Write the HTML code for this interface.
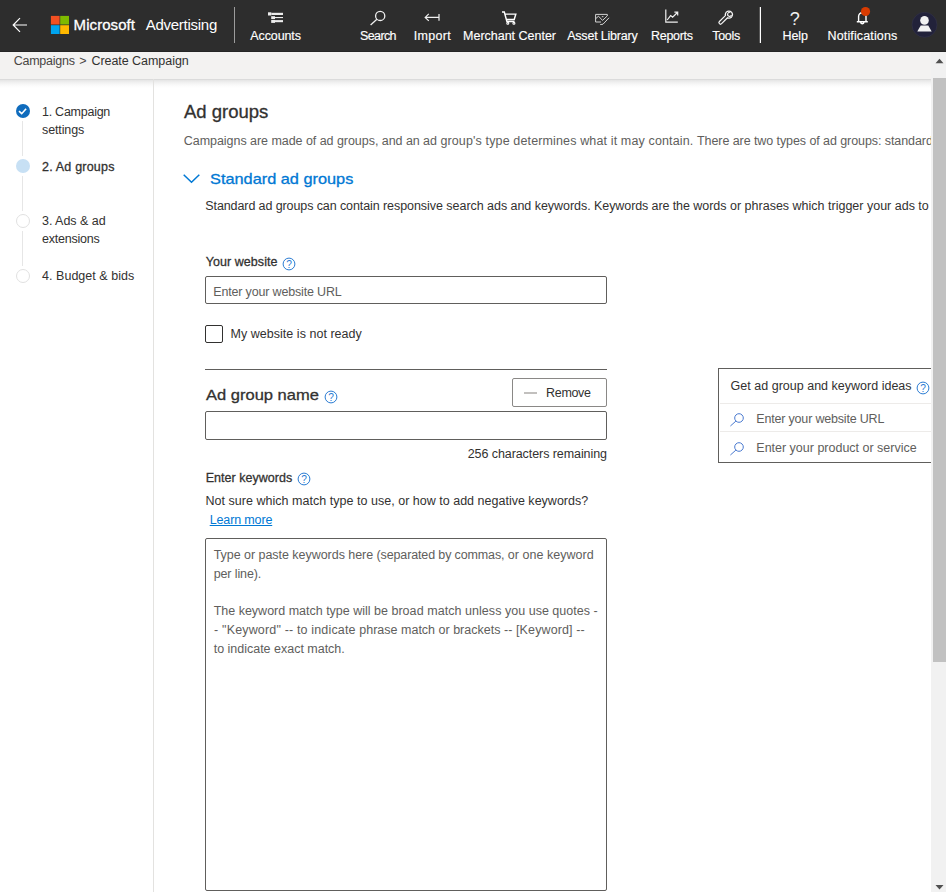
<!DOCTYPE html>
<html lang="en"><head><meta charset="utf-8"><title>Create Campaign - Microsoft Advertising</title>
<style>
html,body{margin:0;padding:0;}
body{width:946px;height:892px;position:relative;overflow:hidden;background:#fff;font-family:"Liberation Sans",sans-serif;}
.t{position:absolute;white-space:pre;line-height:1;margin:0;padding:0;}
.a{position:absolute;box-sizing:border-box;}
#hdr{left:0;top:0;width:946px;height:52px;background:#2d2d2d;border-bottom:1px solid #252525;}
#bc{left:0;top:52px;width:931px;height:27px;background:#f3f2f1;}
#bcsh{left:0;top:79px;width:931px;height:9px;background:linear-gradient(#d4d4d4,#e6e6e6 14%,#f1f1f1 40%,#fafafa 70%,#ffffff);}
#side{left:0;top:79px;width:154px;height:813px;border-right:1px solid #e3e2e0;}
#clip{left:154px;top:79px;width:777px;height:813px;overflow:hidden;}
.vdiv{width:1px;background:#7a7a7a;}
.box{border:1px solid #605e5c;border-radius:2px;background:#fff;}
.sline{width:1px;background:#e6e6e6;left:22px;}
.dot{width:14px;height:14px;border-radius:50%;left:16px;}
#sbtrack{z-index:5;left:931px;top:52px;width:15px;height:840px;background:#f1f1f1;}
#sbthumb{z-index:6;left:933px;top:78px;width:13px;height:584px;background:#c1c1c1;}
svg{position:absolute;overflow:visible;}

#sbar{z-index:7;}

</style></head>
<body>
<div class="a" id="hdr"></div>
<div class="a" id="bc"></div>
<div class="a" id="bcsh"></div>
<div class="a" id="side"></div>
<!-- header pieces -->
<svg style="left:12px;top:17px" width="16" height="16" viewBox="0 0 16 16"><path d="M15 8H1.5M8 1.2L1.2 8l6.8 6.8" fill="none" stroke="#fff" stroke-width="1.2"/></svg>
<svg style="left:0;top:0" width="80" height="52" viewBox="0 0 80 52"><rect x="50.9" y="15.9" width="8.7" height="8.6" fill="#f25022"/><rect x="60.2" y="15.9" width="8.8" height="8.6" fill="#7fba00"/><rect x="50.9" y="25.2" width="8.7" height="8.8" fill="#00a4ef"/><rect x="60.2" y="25.2" width="8.8" height="8.8" fill="#ffb900"/></svg>
<div class="a vdiv" style="left:234px;top:7px;height:36px;background:#9c9c9c"></div>
<div class="a vdiv" style="left:760px;top:7px;height:36px;background:#fdfdfd"></div><div class="a vdiv" style="left:759px;top:7px;height:36px;background:#5a5a5a"></div>

<svg style="left:0;top:0" width="946" height="52" viewBox="0 0 946 52" fill="none" stroke="#f0f0f0" stroke-width="1.1">
<!-- accounts -->
<g fill="#ececec" stroke="none"><rect x="268" y="12.3" width="3.3" height="3.2"/><rect x="271.3" y="12.8" width="11.7" height="2.2"/><rect x="271.2" y="16.2" width="3.8" height="2.8"/><rect x="275" y="17" width="8" height="1.1"/><rect x="271.2" y="19.9" width="3.8" height="3"/><rect x="275" y="20.1" width="8" height="2.1"/></g>
<!-- search -->
<circle cx="380.2" cy="15.9" r="4.6" stroke-width="1.3"/><path d="M376.9 19.3L370.6 25" stroke-width="1.3"/>
<!-- import -->
<path d="M425.2 17.4H439M428.8 13.9L425.2 17.4l3.6 3.5M439 14v6.8" stroke-width="1.2"/>
<!-- cart -->
<path d="M502 12h2.3l2.6 9.4h7.6M505 14.1h10.8l-1.6 5.4H506.4" stroke="#fff" stroke-width="1.45"/><circle cx="507.8" cy="23.3" r="1" stroke="#fff" stroke-width="1.1"/><circle cx="513.9" cy="23.3" r="1" stroke="#fff" stroke-width="1.1"/>
<!-- asset library -->
<g stroke="#d4d4d4" stroke-width="1"><path d="M607.3 16V14.4H595.6V22H601"/><path d="M595.8 18.6l2.7-2.4 4 4.2 4.6-4.3M609 17.8l-6 6.4-2.8.4M601.8 16.7h1.6"/></g>
<!-- reports -->
<path d="M665.8 9.6V22.2H677.8M667.2 20l3.4-4.4 2 1.5 4.8-4.6M674.4 12.2h3.3v3.3" stroke-width="1.2"/>
<!-- tools wrench -->
<path d="M720.5 22.6L727.2 15.9" stroke="#f4f4f4" stroke-width="4.3" stroke-linecap="round"/>
<circle cx="728.9" cy="14.6" r="4.2" fill="#f4f4f4" stroke="none"/>
<path d="M720.5 22.6L727.4 15.7" stroke="#2d2d2d" stroke-width="1.9" stroke-linecap="round"/>
<circle cx="728.9" cy="14.6" r="2.9" fill="#2d2d2d" stroke="none"/>
<path d="M730.3 12.4a2 2 0 1 0 1.2 2.6" stroke="#f4f4f4" stroke-width="1.1"/>
<!-- bell -->
<path d="M858.6 21.6v-5.2a3.7 3.7 0 0 1 7.4 0v5.2M856.8 21.8h11M860.6 22.6a1.8 1.8 0 0 0 3.4 0" stroke="#fff" stroke-width="1.4"/>
<circle cx="865.5" cy="11.5" r="4.6" fill="#d83b01" stroke="none"/>
<!-- avatar -->
<circle cx="924.5" cy="24.8" r="12.5" fill="#22223a" stroke="#34344a" stroke-width="0.6"/>
<circle cx="924.5" cy="20.4" r="4.3" fill="#f2f2f2" stroke="none"/>
<path d="M917.3 31.6l3.4-6.2h7.6l3.4 6.2z" fill="#f2f2f2" stroke="none"/>
<text x="794.8" y="24.6" font-family="Liberation Sans, sans-serif" font-size="18" fill="#f0f0f0" stroke="none" text-anchor="middle">?</text>
</svg>

<!-- sidebar -->
<div class="a sline" style="top:121px;height:35px"></div>
<div class="a sline" style="top:176px;height:35px"></div>
<div class="a sline" style="top:231px;height:35px"></div>
<div class="a dot" style="top:104px;background:#0f6cbd"></div>
<svg style="left:16px;top:104px" width="14" height="14" viewBox="0 0 14 14"><path d="M3 7.1l2.7 2.6 4.4-4.9" fill="none" stroke="#fff" stroke-width="1.6"/></svg>
<div class="a dot" style="top:159px;background:#c7e0f4"></div>
<div class="a dot" style="top:214px;background:#fff;border:1px solid #e1e1e1"></div>
<div class="a dot" style="top:268.5px;background:#fff;border:1px solid #e1e1e1"></div>
<!-- main shapes -->
<svg style="left:183px;top:174px" width="17" height="10" viewBox="0 0 17 10"><path d="M0.7 0.7L8.5 8.3 16.3 0.7" fill="none" stroke="#0078d4" stroke-width="1.5"/></svg>
<div class="a box" style="left:205px;top:276px;width:402px;height:28px"></div>
<div class="a" style="left:205px;top:325px;width:18px;height:18px;border:1px solid #323130;border-radius:2px"></div>
<div class="a" style="left:205px;top:369px;width:402px;height:1px;background:#605e5c"></div>
<div class="a" style="left:512px;top:378px;width:95px;height:29px;border:1px solid #8a8886;border-radius:2px"></div>
<div class="a" style="left:524px;top:392px;width:13px;height:2px;background:#c2c0be"></div>
<div class="a box" style="left:205px;top:411px;width:402px;height:29px"></div>
<div class="a box" style="left:205px;top:538px;width:402px;height:353px"></div>
<!-- panel -->
<div class="a" style="left:718px;top:368px;width:230px;height:95px;border:1px solid #605e5c;background:#fff"></div>
<div class="a" style="left:720px;top:403px;width:211px;height:1px;background:#edebe9"></div>
<div class="a" style="left:720px;top:431px;width:211px;height:1px;background:#edebe9"></div>
<svg style="left:281px;top:255.8px" width="16" height="16" viewBox="-8 -8 16 16"><circle cx="0" cy="0" r="5.9" fill="none" stroke="#2b7cd3" stroke-width="1"/><text x="0" y="3.6" font-family="Liberation Sans, sans-serif" font-size="10.2" fill="#2b7cd3" text-anchor="middle">?</text></svg><svg style="left:323px;top:389px" width="16" height="16" viewBox="-8 -8 16 16"><circle cx="0" cy="0" r="5.9" fill="none" stroke="#2b7cd3" stroke-width="1"/><text x="0" y="3.6" font-family="Liberation Sans, sans-serif" font-size="10.2" fill="#2b7cd3" text-anchor="middle">?</text></svg><svg style="left:295.6px;top:471.3px" width="16" height="16" viewBox="-8 -8 16 16"><circle cx="0" cy="0" r="5.9" fill="none" stroke="#2b7cd3" stroke-width="1"/><text x="0" y="3.6" font-family="Liberation Sans, sans-serif" font-size="10.2" fill="#2b7cd3" text-anchor="middle">?</text></svg><svg style="left:915.3px;top:380px" width="16" height="16" viewBox="-8 -8 16 16"><circle cx="0" cy="0" r="5.9" fill="none" stroke="#2b7cd3" stroke-width="1"/><text x="0" y="3.6" font-family="Liberation Sans, sans-serif" font-size="10.2" fill="#2b7cd3" text-anchor="middle">?</text></svg><svg style="left:728.7px;top:408.2px" width="20" height="20" viewBox="-10 -10 20 20" fill="none" stroke="#4a7ad0" stroke-width="1"><circle cx="0" cy="0" r="4.3"/><path d="M-3.1 3.1L-8.6 8"/></svg><svg style="left:728.7px;top:437.2px" width="20" height="20" viewBox="-10 -10 20 20" fill="none" stroke="#4a7ad0" stroke-width="1"><circle cx="0" cy="0" r="4.3"/><path d="M-3.1 3.1L-8.6 8"/></svg>
<!-- scrollbar -->
<div class="a" id="sbtrack"></div>
<div class="a" id="sbthumb"></div>
<svg id="sbar" style="left:931px;top:52px" width="15" height="840" viewBox="0 0 15 840"><path d="M4.5 11.2L8.5 6.8 12.5 11.2z" fill="#505050"/><path d="M4.5 833L8.5 837.4 12.5 833z" fill="#505050"/></svg>

<div class="t" id="ms" style="left:73.6px;top:17.00px;font-size:15px;color:#ffffff;letter-spacing:0.070px;-webkit-text-stroke:0.3px #ffffff;">Microsoft</div>
<div class="t" id="adv" style="left:145.7px;top:17.00px;font-size:15px;color:#ffffff;letter-spacing:-0.260px;">Advertising</div>
<div class="t" id="n1" style="left:250.3px;top:30.00px;font-size:12.5px;color:#ffffff;letter-spacing:-0.103px;-webkit-text-stroke:0.15px #ffffff;">Accounts</div>
<div class="t" id="n2" style="left:360.0px;top:30.00px;font-size:12.5px;color:#ffffff;letter-spacing:-0.622px;-webkit-text-stroke:0.15px #ffffff;">Search</div>
<div class="t" id="n3" style="left:413.8px;top:30.00px;font-size:12.5px;color:#ffffff;letter-spacing:0.312px;-webkit-text-stroke:0.15px #ffffff;">Import</div>
<div class="t" id="n4" style="left:463.1px;top:30.00px;font-size:12.5px;color:#ffffff;letter-spacing:-0.015px;-webkit-text-stroke:0.15px #ffffff;">Merchant Center</div>
<div class="t" id="n5" style="left:567.2px;top:30.00px;font-size:12.5px;color:#ffffff;letter-spacing:-0.204px;-webkit-text-stroke:0.15px #ffffff;">Asset Library</div>
<div class="t" id="n6" style="left:651.0px;top:30.00px;font-size:12.5px;color:#ffffff;letter-spacing:-0.297px;-webkit-text-stroke:0.15px #ffffff;">Reports</div>
<div class="t" id="n7" style="left:712.2px;top:30.00px;font-size:12.5px;color:#ffffff;letter-spacing:-0.272px;-webkit-text-stroke:0.15px #ffffff;">Tools</div>
<div class="t" id="n8" style="left:782.6px;top:30.00px;font-size:12.5px;color:#ffffff;letter-spacing:-0.106px;-webkit-text-stroke:0.15px #ffffff;">Help</div>
<div class="t" id="n9" style="left:827.5px;top:30.00px;font-size:12.5px;color:#ffffff;letter-spacing:0.142px;-webkit-text-stroke:0.15px #ffffff;">Notifications</div>
<div class="t" id="bc1" style="left:13.7px;top:55.00px;font-size:12.5px;color:#484644;letter-spacing:-0.254px;">Campaigns</div>
<div class="t" id="bc2" style="left:79.2px;top:55.00px;font-size:12.5px;color:#484644;letter-spacing:-0.513px;">&gt;</div>
<div class="t" id="bc3" style="left:91.4px;top:55.00px;font-size:12.5px;color:#323130;letter-spacing:-0.041px;">Create Campaign</div>
<div class="t" id="s1a" style="left:42.0px;top:106.00px;font-size:12.5px;color:#323130;letter-spacing:-0.258px;">1. Campaign</div>
<div class="t" id="s1b" style="left:42.0px;top:124.00px;font-size:12.5px;color:#323130;letter-spacing:-0.113px;">settings</div>
<div class="t" id="s2" style="left:42.0px;top:161.00px;font-size:12.5px;color:#323130;letter-spacing:0.200px;-webkit-text-stroke:0.3px #323130;">2. Ad groups</div>
<div class="t" id="s3a" style="left:42.0px;top:215.00px;font-size:12.5px;color:#323130;letter-spacing:-0.034px;">3. Ads &amp; ad</div>
<div class="t" id="s3b" style="left:42.0px;top:233.00px;font-size:12.5px;color:#323130;letter-spacing:-0.218px;">extensions</div>
<div class="t" id="s4" style="left:42.0px;top:270.00px;font-size:12.5px;color:#323130;letter-spacing:0.038px;">4. Budget &amp; bids</div>
<div class="t" id="h1" style="left:183.7px;top:104.00px;font-size:17.5px;color:#323130;letter-spacing:0.000px;-webkit-text-stroke:0.3px #323130;transform:scaleX(1.0566);transform-origin:0 0;">Ad groups</div>
<div class="t" id="d1a" style="left:183.8px;top:135.00px;font-size:12.5px;color:#605e5c;letter-spacing:-0.045px;">Campaigns are made of ad groups, and an ad </div>
<div class="t" id="d1b" style="left:440.4px;top:135.00px;font-size:12.5px;color:#605e5c;letter-spacing:0.137px;">group's type determines what it may contain. </div>
<div class="t" id="d1c" style="left:697.0px;top:135.00px;font-size:12.5px;color:#605e5c;letter-spacing:-0.076px;">There are two types of ad groups: </div>
<div class="t" id="d1z" style="left:884.8px;top:135.00px;font-size:12.5px;color:#605e5c;letter-spacing:-0.076px;">standard and dynamic search ad groups.</div>
<div class="t" id="h2" style="left:210.0px;top:171.00px;font-size:15px;color:#0078d4;letter-spacing:0.000px;-webkit-text-stroke:0.3px #0078d4;transform:scaleX(1.0875);transform-origin:0 0;">Standard ad groups</div>
<div class="t" id="d2a" style="left:205.3px;top:200.00px;font-size:12.5px;color:#323130;letter-spacing:-0.100px;">Standard ad groups can contain </div>
<div class="t" id="d2b" style="left:382.9px;top:200.00px;font-size:12.5px;color:#323130;letter-spacing:-0.040px;">responsive search ads and keywords. </div>
<div class="t" id="d2c" style="left:594.1px;top:200.00px;font-size:12.5px;color:#323130;letter-spacing:-0.097px;">Keywords are the </div>
<div class="t" id="d2d" style="left:693.2px;top:200.00px;font-size:12.5px;color:#323130;letter-spacing:0.002px;">words or phrases which trigger your ads to</div>
<div class="t" id="d2z" style="left:928.8px;top:200.00px;font-size:12.5px;color:#323130;letter-spacing:0.002px;"> show in search results.</div>
<div class="t" id="l1" style="left:205.7px;top:256.00px;font-size:12.5px;color:#323130;letter-spacing:0.061px;-webkit-text-stroke:0.28px #323130;">Your website</div>
<div class="t" id="p1" style="left:213.3px;top:286.00px;font-size:12.5px;color:#605e5c;letter-spacing:-0.172px;">Enter your website URL</div>
<div class="t" id="c1" style="left:230.5px;top:328.00px;font-size:12.5px;color:#323130;letter-spacing:0.031px;">My website is not ready</div>
<div class="t" id="h3" style="left:205.7px;top:387.00px;font-size:15px;color:#323130;letter-spacing:0.000px;-webkit-text-stroke:0.3px #323130;transform:scaleX(1.1006);transform-origin:0 0;">Ad group name</div>
<div class="t" id="rm" style="left:546.1px;top:387.00px;font-size:12.5px;color:#323130;letter-spacing:-0.329px;">Remove</div>
<div class="t" id="ch" style="left:467.7px;top:448.00px;font-size:12.5px;color:#323130;letter-spacing:-0.076px;">256 characters remaining</div>
<div class="t" id="l2" style="left:205.7px;top:472.00px;font-size:12.5px;color:#323130;letter-spacing:0.026px;-webkit-text-stroke:0.28px #323130;">Enter keywords</div>
<div class="t" id="nsa" style="left:205.5px;top:495.00px;font-size:12.5px;color:#323130;letter-spacing:0.027px;">Not sure which match type to use, </div>
<div class="t" id="nsb" style="left:398.2px;top:495.00px;font-size:12.5px;color:#323130;letter-spacing:0.010px;">or how to add negative keywords?</div>
<div class="t" id="lm" style="left:209.7px;top:514.00px;font-size:12.5px;color:#0078d4;letter-spacing:-0.138px;text-decoration:underline;text-underline-offset:1px;">Learn more</div>
<div class="t" id="k1a" style="left:213.7px;top:549.00px;font-size:12.5px;color:#605e5c;letter-spacing:-0.039px;">Type or paste keywords here </div>
<div class="t" id="k1b" style="left:376.6px;top:549.00px;font-size:12.5px;color:#605e5c;letter-spacing:-0.136px;">(separated by commas, </div>
<div class="t" id="k1c" style="left:507.7px;top:549.00px;font-size:12.5px;color:#605e5c;letter-spacing:0.049px;">or one keyword</div>
<div class="t" id="k2" style="left:213.7px;top:568.00px;font-size:12.5px;color:#605e5c;letter-spacing:-0.116px;">per line).</div>
<div class="t" id="k3a" style="left:213.7px;top:605.00px;font-size:12.5px;color:#605e5c;letter-spacing:-0.005px;">The keyword match type will be </div>
<div class="t" id="k3b" style="left:391.4px;top:605.00px;font-size:12.5px;color:#605e5c;letter-spacing:0.055px;">broad match unless </div>
<div class="t" id="k3c" style="left:505.0px;top:605.00px;font-size:12.5px;color:#605e5c;letter-spacing:0.012px;">you use quotes -</div>
<div class="t" id="k4a" style="left:214.1px;top:624.00px;font-size:12.5px;color:#605e5c;letter-spacing:0.160px;">- &quot;Keyword&quot; -- to indicate </div>
<div class="t" id="k4b" style="left:359.3px;top:624.00px;font-size:12.5px;color:#605e5c;letter-spacing:0.003px;">phrase match or brackets </div>
<div class="t" id="k4c" style="left:503.9px;top:624.00px;font-size:12.5px;color:#605e5c;letter-spacing:0.115px;">-- [Keyword] --</div>
<div class="t" id="k5" style="left:213.7px;top:643.00px;font-size:12.5px;color:#605e5c;letter-spacing:-0.010px;">to indicate exact match.</div>
<div class="t" id="g1" style="left:730.6px;top:380.00px;font-size:12.5px;color:#323130;letter-spacing:0.011px;">Get ad group and keyword ideas</div>
<div class="t" id="g2" style="left:756.3px;top:413.00px;font-size:12.5px;color:#605e5c;letter-spacing:-0.186px;">Enter your website URL</div>
<div class="t" id="g3" style="left:756.3px;top:442.00px;font-size:12.5px;color:#605e5c;letter-spacing:-0.004px;">Enter your product or service</div>
</body></html>
